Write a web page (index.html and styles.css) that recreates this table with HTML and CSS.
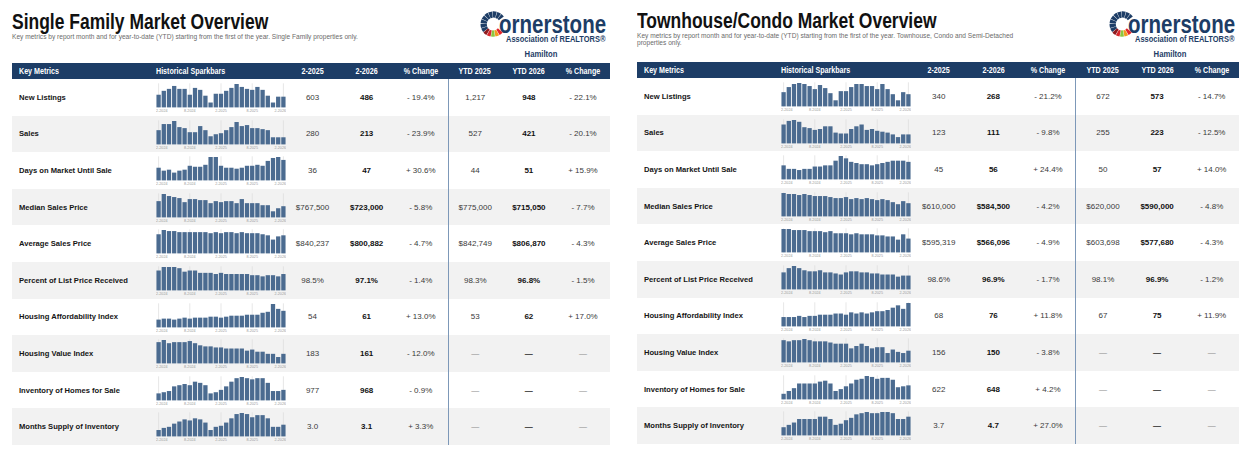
FILE: index.html
```html
<!DOCTYPE html>
<html lang="en">
<head>
<meta charset="utf-8">
<title>Market Overview</title>
<link rel="stylesheet" href="styles.css">
</head>
<body>
<div class="page">

  <section class="panel panel-sf">
    <header class="panel-head">
      <div class="titles">
        <h1 class="title"><span class="cond">Single Family Market Overview</span></h1>
        <p class="subtitle">Key metrics by report month and for year-to-date (YTD) starting from the first of the year. Single Family properties only.</p>
      </div>
      <div class="brand">
        <svg class="logo" viewBox="0 0 128 32" width="128" height="32" role="img" aria-label="Cornerstone Association of REALTORS">
          <path d="M5.65 19.17 A9.6 9.6 0 1 1 21.31 7.36" fill="none" stroke="#1d3d66" stroke-width="6.3" stroke-dasharray="3.1 0.4"/>
          <path d="M20.35 19.17 A9.6 9.6 0 0 1 17.8 21.31" fill="none" stroke="#e3262d" stroke-width="6.3" stroke-dasharray="0 0.2 2.95 1"/>
          <path d="M17.8 21.31 A9.6 9.6 0 0 1 14.67 22.45" fill="none" stroke="#f39a1e" stroke-width="6.3" stroke-dasharray="0 0.2 2.95 1"/>
          <path d="M14.67 22.45 A9.6 9.6 0 0 1 11.33 22.45" fill="none" stroke="#8dc63f" stroke-width="6.3" stroke-dasharray="0 0.2 2.95 1"/>
          <path d="M11.33 22.45 A9.6 9.6 0 0 1 8.2 21.31" fill="none" stroke="#d7262b" stroke-width="6.3" stroke-dasharray="0 0.2 2.95 1"/>
          <path d="M8.2 21.31 A9.6 9.6 0 0 1 5.65 19.17" fill="none" stroke="#8e1b1f" stroke-width="6.3" stroke-dasharray="0 0.2 2.95 1"/>
          <g transform="translate(19 22.3) scale(0.82 1)"><text class="logo-word" x="0" y="0">ornerstone</text></g>
          <g transform="translate(26 30.6) scale(0.78 1)"><text class="logo-assoc" x="0" y="0">Association of REALTORS®</text></g>
        </svg>
        <div class="region"><span class="cond">Hamilton</span></div>
      </div>
    </header>

    <div class="table">
      <div class="thead">
        <div class="th th-left"><span class="cond">Key Metrics</span></div>
        <div class="th th-left th-spark"><span class="cond">Historical Sparkbars</span></div>
        <div class="th"><span class="cond">2-2025</span></div>
        <div class="th"><span class="cond">2-2026</span></div>
        <div class="th"><span class="cond">% Change</span></div>
        <div class="th"><span class="cond">YTD 2025</span></div>
        <div class="th"><span class="cond">YTD 2026</span></div>
        <div class="th"><span class="cond">% Change</span></div>
      </div>
      <div class="tr">
        <div class="td metric">New Listings</div>
        <div class="td spark" data-bars="13,17,19,22,19,19,13,20,18,12,5,14,14,17,20,24,21,19,18,21,18,12,5,11,11"></div>
        <div class="td num">603</div><div class="td num strong">486</div><div class="td num">- 19.4%</div>
        <div class="td num ytd">1,217</div><div class="td num strong">948</div><div class="td num">- 22.1%</div>
      </div>
      <div class="tr">
        <div class="td metric">Sales</div>
        <div class="td spark" data-bars="14,20,20,23,17,16,12,12,18,14,8,10,11,14,17,22,18,19,16,16,15,14,7,7,7"></div>
        <div class="td num">280</div><div class="td num strong">213</div><div class="td num">- 23.9%</div>
        <div class="td num ytd">527</div><div class="td num strong">421</div><div class="td num">- 20.1%</div>
      </div>
      <div class="tr">
        <div class="td metric">Days on Market Until Sale</div>
        <div class="td spark" data-bars="13,10,11,8,10,11,15,14,14,16,24,24,15,13,13,12,13,15,15,16,15,20,23,24,21"></div>
        <div class="td num">36</div><div class="td num strong">47</div><div class="td num">+ 30.6%</div>
        <div class="td num ytd">44</div><div class="td num strong">51</div><div class="td num">+ 15.9%</div>
      </div>
      <div class="tr">
        <div class="td metric">Median Sales Price</div>
        <div class="td spark" data-bars="16,23,21,20,19,15,18,18,17,17,14,16,15,16,16,14,18,14,14,14,12,12,6,9,11"></div>
        <div class="td num">$767,500</div><div class="td num strong">$723,000</div><div class="td num">- 5.8%</div>
        <div class="td num ytd">$775,000</div><div class="td num strong">$715,050</div><div class="td num">- 7.7%</div>
      </div>
      <div class="tr">
        <div class="td metric">Average Sales Price</div>
        <div class="td spark" data-bars="18,22,21,21,20,20,20,20,20,20,19,20,19,20,20,19,20,19,19,19,18,17,13,16,17"></div>
        <div class="td num">$840,237</div><div class="td num strong">$800,882</div><div class="td num">- 4.7%</div>
        <div class="td num ytd">$842,749</div><div class="td num strong">$806,870</div><div class="td num">- 4.3%</div>
      </div>
      <div class="tr">
        <div class="td metric">Percent of List Price Received</div>
        <div class="td spark" data-bars="17,20,20,20,19,16,17,17,15,15,15,14,15,14,14,14,14,14,13,13,12,13,13,12,14"></div>
        <div class="td num">98.5%</div><div class="td num strong">97.1%</div><div class="td num">- 1.4%</div>
        <div class="td num ytd">98.3%</div><div class="td num strong">96.8%</div><div class="td num">- 1.5%</div>
      </div>
      <div class="tr">
        <div class="td metric">Housing Affordability Index</div>
        <div class="td spark" data-bars="8,9,9,8,9,10,9,10,10,10,11,11,10,11,12,12,12,13,13,13,15,16,24,19,17"></div>
        <div class="td num">54</div><div class="td num strong">61</div><div class="td num">+ 13.0%</div>
        <div class="td num ytd">53</div><div class="td num strong">62</div><div class="td num">+ 17.0%</div>
      </div>
      <div class="tr">
        <div class="td metric">Housing Value Index</div>
        <div class="td spark" data-bars="20,22,19,20,20,20,21,19,17,16,16,15,15,14,14,14,14,12,13,11,11,9,9,6,9"></div>
        <div class="td num">183</div><div class="td num strong">161</div><div class="td num">- 12.0%</div>
        <div class="td num ytd dash">—</div><div class="td num strong dash">—</div><div class="td num dash">—</div>
      </div>
      <div class="tr">
        <div class="td metric">Inventory of Homes for Sale</div>
        <div class="td spark" data-bars="6,7,8,12,13,14,13,16,15,13,6,7,9,12,16,19,20,19,18,19,19,15,8,8,9"></div>
        <div class="td num">977</div><div class="td num strong">968</div><div class="td num">- 0.9%</div>
        <div class="td num ytd dash">—</div><div class="td num strong dash">—</div><div class="td num dash">—</div>
      </div>
      <div class="tr">
        <div class="td metric">Months Supply of Inventory</div>
        <div class="td spark" data-bars="6,8,9,12,14,16,15,17,16,13,6,9,10,13,17,21,22,21,18,20,20,17,9,9,11"></div>
        <div class="td num">3.0</div><div class="td num strong">3.1</div><div class="td num">+ 3.3%</div>
        <div class="td num ytd dash">—</div><div class="td num strong dash">—</div><div class="td num dash">—</div>
      </div>
    </div>
  </section>

  <section class="panel panel-tc">
    <header class="panel-head">
      <div class="titles">
        <h1 class="title"><span class="cond">Townhouse/Condo Market Overview</span></h1>
        <p class="subtitle">Key metrics by report month and for year-to-date (YTD) starting from the first of the year. Townhouse, Condo and Semi-Detached properties only.</p>
      </div>
      <div class="brand">
        <svg class="logo" viewBox="0 0 128 32" width="128" height="32" role="img" aria-label="Cornerstone Association of REALTORS">
          <path d="M5.65 19.17 A9.6 9.6 0 1 1 21.31 7.36" fill="none" stroke="#1d3d66" stroke-width="6.3" stroke-dasharray="3.1 0.4"/>
          <path d="M20.35 19.17 A9.6 9.6 0 0 1 17.8 21.31" fill="none" stroke="#e3262d" stroke-width="6.3" stroke-dasharray="0 0.2 2.95 1"/>
          <path d="M17.8 21.31 A9.6 9.6 0 0 1 14.67 22.45" fill="none" stroke="#f39a1e" stroke-width="6.3" stroke-dasharray="0 0.2 2.95 1"/>
          <path d="M14.67 22.45 A9.6 9.6 0 0 1 11.33 22.45" fill="none" stroke="#8dc63f" stroke-width="6.3" stroke-dasharray="0 0.2 2.95 1"/>
          <path d="M11.33 22.45 A9.6 9.6 0 0 1 8.2 21.31" fill="none" stroke="#d7262b" stroke-width="6.3" stroke-dasharray="0 0.2 2.95 1"/>
          <path d="M8.2 21.31 A9.6 9.6 0 0 1 5.65 19.17" fill="none" stroke="#8e1b1f" stroke-width="6.3" stroke-dasharray="0 0.2 2.95 1"/>
          <g transform="translate(19 22.3) scale(0.82 1)"><text class="logo-word" x="0" y="0">ornerstone</text></g>
          <g transform="translate(26 30.6) scale(0.78 1)"><text class="logo-assoc" x="0" y="0">Association of REALTORS®</text></g>
        </svg>
        <div class="region"><span class="cond">Hamilton</span></div>
      </div>
    </header>

    <div class="table">
      <div class="thead">
        <div class="th th-left"><span class="cond">Key Metrics</span></div>
        <div class="th th-left th-spark"><span class="cond">Historical Sparkbars</span></div>
        <div class="th"><span class="cond">2-2025</span></div>
        <div class="th"><span class="cond">2-2026</span></div>
        <div class="th"><span class="cond">% Change</span></div>
        <div class="th"><span class="cond">YTD 2025</span></div>
        <div class="th"><span class="cond">YTD 2026</span></div>
        <div class="th"><span class="cond">% Change</span></div>
      </div>
      <div class="tr">
        <div class="td metric">New Listings</div>
        <div class="td spark" data-bars="14,19,22,23,22,20,17,21,18,13,6,15,15,19,22,22,20,20,17,22,17,12,6,14,12"></div>
        <div class="td num">340</div><div class="td num strong">268</div><div class="td num">- 21.2%</div>
        <div class="td num ytd">672</div><div class="td num strong">573</div><div class="td num">- 14.7%</div>
      </div>
      <div class="tr">
        <div class="td metric">Sales</div>
        <div class="td spark" data-bars="21,25,26,24,18,17,15,16,19,19,12,11,11,16,19,21,15,16,14,13,12,10,7,10,10"></div>
        <div class="td num">123</div><div class="td num strong">111</div><div class="td num">- 9.8%</div>
        <div class="td num ytd">255</div><div class="td num strong">223</div><div class="td num">- 12.5%</div>
      </div>
      <div class="tr">
        <div class="td metric">Days on Market Until Sale</div>
        <div class="td spark" data-bars="12,9,9,8,9,9,11,11,12,12,16,20,18,15,14,13,13,12,13,14,15,16,16,16,15"></div>
        <div class="td num">45</div><div class="td num strong">56</div><div class="td num">+ 24.4%</div>
        <div class="td num ytd">50</div><div class="td num strong">57</div><div class="td num">+ 14.0%</div>
      </div>
      <div class="tr">
        <div class="td metric">Median Sales Price</div>
        <div class="td spark" data-bars="23,22,22,21,22,21,20,20,20,19,18,18,19,17,18,17,18,17,16,17,16,14,12,15,13"></div>
        <div class="td num">$610,000</div><div class="td num strong">$584,500</div><div class="td num">- 4.2%</div>
        <div class="td num ytd">$620,000</div><div class="td num strong">$590,000</div><div class="td num">- 4.8%</div>
      </div>
      <div class="tr">
        <div class="td metric">Average Sales Price</div>
        <div class="td spark" data-bars="22,22,21,21,21,20,20,20,19,20,18,18,18,17,18,17,17,17,16,16,15,15,12,17,13"></div>
        <div class="td num">$595,319</div><div class="td num strong">$566,096</div><div class="td num">- 4.9%</div>
        <div class="td num ytd">$603,698</div><div class="td num strong">$577,680</div><div class="td num">- 4.3%</div>
      </div>
      <div class="tr">
        <div class="td metric">Percent of List Price Received</div>
        <div class="td spark" data-bars="16,20,22,20,18,17,17,18,16,16,15,14,16,17,17,16,16,15,15,14,14,14,12,13,13"></div>
        <div class="td num">98.6%</div><div class="td num strong">96.9%</div><div class="td num">- 1.7%</div>
        <div class="td num ytd">98.1%</div><div class="td num strong">96.9%</div><div class="td num">- 1.2%</div>
      </div>
      <div class="tr">
        <div class="td metric">Housing Affordability Index</div>
        <div class="td spark" data-bars="8,8,8,9,8,9,9,10,10,10,11,11,10,12,11,12,11,12,13,13,14,16,18,15,20"></div>
        <div class="td num">68</div><div class="td num strong">76</div><div class="td num">+ 11.8%</div>
        <div class="td num ytd">67</div><div class="td num strong">75</div><div class="td num">+ 11.9%</div>
      </div>
      <div class="tr">
        <div class="td metric">Housing Value Index</div>
        <div class="td spark" data-bars="19,18,19,19,20,19,18,18,18,17,16,16,16,12,14,16,14,12,13,13,8,11,9,8,10"></div>
        <div class="td num">156</div><div class="td num strong">150</div><div class="td num">- 3.8%</div>
        <div class="td num ytd dash">—</div><div class="td num strong dash">—</div><div class="td num dash">—</div>
      </div>
      <div class="tr">
        <div class="td metric">Inventory of Homes for Sale</div>
        <div class="td spark" data-bars="6,9,12,17,17,17,17,19,20,17,9,11,14,17,21,22,25,24,22,23,23,21,13,14,15"></div>
        <div class="td num">622</div><div class="td num strong">648</div><div class="td num">+ 4.2%</div>
        <div class="td num ytd dash">—</div><div class="td num strong dash">—</div><div class="td num dash">—</div>
      </div>
      <div class="tr">
        <div class="td metric">Months Supply of Inventory</div>
        <div class="td spark" data-bars="7,9,11,14,14,14,14,16,16,14,9,10,13,15,18,19,20,19,19,20,20,19,14,14,16"></div>
        <div class="td num">3.7</div><div class="td num strong">4.7</div><div class="td num">+ 27.0%</div>
        <div class="td num ytd dash">—</div><div class="td num strong dash">—</div><div class="td num dash">—</div>
      </div>
    </div>
  </section>

</div>
<script src="sparkbars.js"></script>
</body>
</html>
```

FILE: styles.css
```css
* { box-sizing: border-box; margin: 0; padding: 0; }

body {
  margin: 0;
  background: #ffffff;
  font-family: "Liberation Sans", Arial, sans-serif;
  color: #222;
}

.page {
  width: 1248px;
  height: 452px;
  overflow: hidden;
  display: grid;
  grid-template-columns: 598px 602px;
  column-gap: 27px;
  padding-left: 12px;
}

.panel { display: flex; flex-direction: column; }

/* condensed look: Liberation Sans Bold narrowed horizontally */
.cond {
  display: inline-block;
  white-space: nowrap;
  transform: scaleX(0.82);
  transform-origin: center center;
}

.panel-head {
  display: flex;
  justify-content: space-between;
  align-items: flex-start;
  height: 63px;
}
.panel-tc .panel-head { height: 62px; }

.titles { padding-top: 12px; }
.panel-tc .titles { padding-top: 11px; }

.title {
  font-weight: 700;
  font-size: 21.3px;
  line-height: 21px;
  color: #111;
  white-space: nowrap;
}
.title .cond { transform-origin: left center; }

.subtitle {
  margin-top: 1px;
  max-width: 390px;
  font-size: 6.6px;
  line-height: 6.8px;
  color: #6b6b6b;
}

.brand {
  width: 128px;
  padding-top: 11px;
  margin-right: 2px;
  display: flex;
  flex-direction: column;
}

.logo { display: block; overflow: visible; }
.logo-word {
  font-family: "Liberation Sans", Arial, sans-serif;
  font-weight: 700;
  font-size: 25px;
  fill: #1d3d66;
}
.logo-assoc {
  font-family: "Liberation Sans", Arial, sans-serif;
  font-weight: 700;
  font-size: 9.6px;
  fill: #1d3d66;
}

.region {
  margin-top: 5.5px;
  padding-right: 5px;
  text-align: center;
  font-weight: 700;
  font-size: 9.4px;
  line-height: 10px;
  color: #1d3d66;
}

/* table */
.thead, .tr {
  display: grid;
  grid-template-columns: 24% 130px repeat(6, 1fr);
}

.thead {
  height: 16px;
  background: #1d3d66;
  align-items: center;
}
.th {
  color: #fff;
  font-weight: 700;
  font-size: 8.7px;
  line-height: 10px;
  text-align: center;
  white-space: nowrap;
}
.th-left { text-align: left; padding-left: 7px; }
.th-left .cond { transform-origin: left center; }
.th-spark { padding-left: 0; }

.tr {
  height: 36.6px;
  align-items: center;
}
.tr:nth-of-type(odd) { background: #f2f2f2; }

.td { height: 100%; display: flex; align-items: center; }

.metric {
  padding-left: 7px;
  font-weight: 700;
  font-size: 7.6px;
  color: #151515;
  white-space: nowrap;
}

.spark { align-items: flex-start; }
.spark svg { display: block; }

.num {
  justify-content: center;
  font-size: 8px;
  color: #3a3a3a;
  white-space: nowrap;
}
.strong { font-weight: 700; color: #111; }
.ytd { border-left: 1px solid #7d98b8; }
.dash { color: #8a8a8a; }
.strong.dash { color: #222; }

/* sparkbar svg parts */
.bar { fill: #4b6b90; }
.grid { stroke: #dcdcdc; stroke-width: 0.7; }
.tick {
  font-family: "Liberation Sans", Arial, sans-serif;
  font-size: 3.7px;
  fill: #9a9a9a;
}
```

FILE: sparkbars.js
```js
(function () {
  var NS = "http://www.w3.org/2000/svg";
  var W = 130, H = 36, N = 25;
  var pitch = W / N, bw = pitch - 0.9;
  var top = 4.6, base = 28.4;
  var ticks = [[0, "2-2024", "start"], [6, "8-2024", "middle"], [12, "2-2025", "middle"], [18, "8-2025", "middle"], [24, "2-2026", "end"]];

  function el(name, attrs, cls) {
    var e = document.createElementNS(NS, name);
    for (var k in attrs) e.setAttribute(k, attrs[k]);
    if (cls) e.setAttribute("class", cls);
    return e;
  }

  document.querySelectorAll(".spark").forEach(function (cell) {
    var v = cell.getAttribute("data-bars").split(",").map(Number);
    var max = Math.max.apply(null, v);
    var svg = el("svg", { viewBox: "0 0 " + W + " " + H, width: W, height: H });

    ticks.forEach(function (t) {
      var x = (t[0] + 0.5) * pitch;
      svg.appendChild(el("line", { x1: x, x2: x, y1: top - 0.3, y2: base }, "grid"));
      var tx = t[2] === "start" ? 0 : t[2] === "end" ? W : x;
      var txt = el("text", { x: tx, y: 33, "text-anchor": t[2] }, "tick");
      txt.textContent = t[1];
      svg.appendChild(txt);
    });

    v.forEach(function (d, i) {
      var h = d / max * (base - top - 0.4);
      svg.appendChild(el("rect", { x: i * pitch + 0.45, y: base - h, width: bw, height: h }, "bar"));
    });

    cell.appendChild(svg);
  });
})();
```
